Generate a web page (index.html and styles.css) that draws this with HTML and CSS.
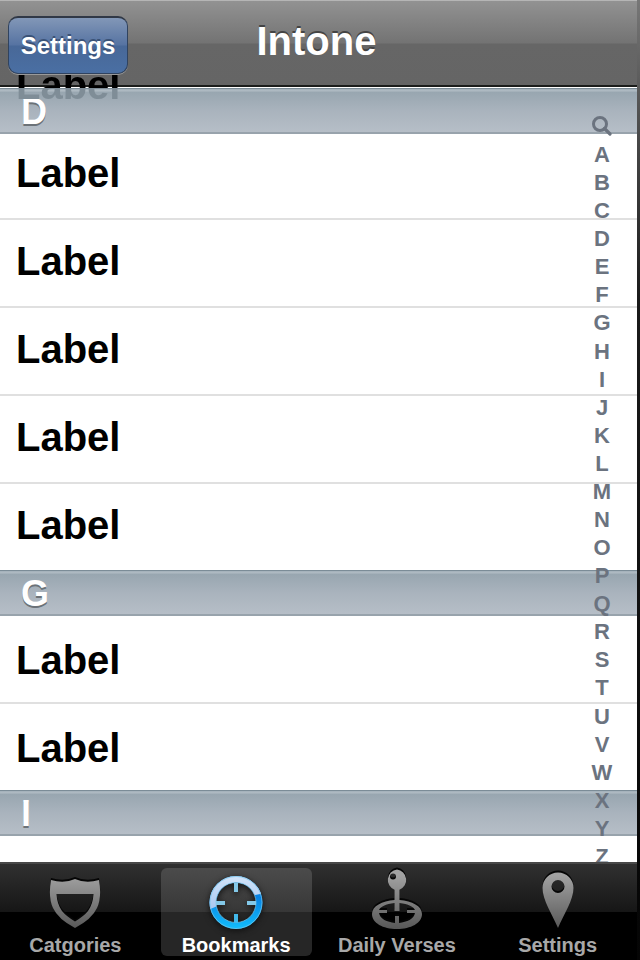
FILE: index.html
```html
<!DOCTYPE html>
<html lang="en">
<head>
<meta charset="utf-8">
<meta name="viewport" content="width=device-width, initial-scale=1">
<title>Intone</title>
<link rel="stylesheet" href="styles.css">
</head>
<body>
<div class="app">
  <header class="navbar">
    <button class="nav-button" type="button">Settings</button>
    <h1 class="title">Intone</h1>
    <span class="passing-row">Label</span>
  </header>
  <main class="content">
    <div class="list">
      <section>
        <h2 class="section-header">D</h2>
        <ul class="rows tucked"><li>Label</li><li>Label</li><li>Label</li><li>Label</li><li>Label</li></ul>
      </section>
      <section>
        <h2 class="section-header">G</h2>
        <ul class="rows"><li>Label</li><li>Label</li></ul>
      </section>
      <section>
        <h2 class="section-header">I</h2>
      </section>
    </div>
    <nav class="index" aria-label="Index">
      <a href="#search" aria-label="Search"><svg width="20" height="20" viewBox="0 0 20 20"><circle cx="8" cy="8" r="6.500" fill="none" stroke="#6b737f" stroke-width="3"/><path d="M12.500 12.500 18 18" stroke="#6b737f" stroke-width="3.200" stroke-linecap="round"/></svg></a>
      <a href="#a">A</a><a href="#b">B</a><a href="#c">C</a><a href="#d">D</a><a href="#e">E</a><a href="#f">F</a><a href="#g">G</a><a href="#h">H</a><a href="#i">I</a><a href="#j">J</a><a href="#k">K</a><a href="#l">L</a><a href="#m">M</a><a href="#n">N</a><a href="#o">O</a><a href="#p">P</a><a href="#q">Q</a><a href="#r">R</a><a href="#s">S</a><a href="#t">T</a><a href="#u">U</a><a href="#v">V</a><a href="#w">W</a><a href="#x">X</a><a href="#y">Y</a><a href="#z">Z</a>
    </nav>
  </main>
  <nav class="tabbar" aria-label="Tabs">
    <button class="tab" type="button">
      <svg class="icon" width="60" height="60" viewBox="0 0 60 60">
        <defs><linearGradient id="gray" gradientUnits="userSpaceOnUse" x1="0" y1="4" x2="0" y2="60"><stop offset="0" stop-color="#a2a2a2"/><stop offset="1" stop-color="#555"/></linearGradient></defs>
        <path fill="url(#gray)" fill-rule="evenodd" d="M6 9Q19 13 30 8Q41 13 54 9Q57 26 52 37Q47 48 30 57Q13 48 8 37Q3 26 6 9ZM11.500 23Q12 33 17 40Q21 45 30 50.500Q39 45 43 40Q48 33 48.500 23Z"/>
      </svg>
      <span>Catgories</span>
    </button>
    <button class="tab selected" type="button" aria-current="page">
      <svg class="icon" width="60" height="60" viewBox="0 0 60 60">
        <defs><linearGradient id="blue" x1="0" y1="0" x2="0" y2="1"><stop offset="0.4" stop-color="#0783e4"/><stop offset="1" stop-color="#12bdfb"/></linearGradient><linearGradient id="gloss" x1="0" y1="0" x2="0" y2="1"><stop offset="0" stop-color="#d3e5fa"/><stop offset="1" stop-color="#8cb5eb"/></linearGradient>
        <clipPath id="upper"><path d="M0 0H60V22Q28 27 0 40Z"/></clipPath></defs>
        <path fill="url(#blue)" fill-rule="evenodd" d="M30 5A26.500 26.500 0 1 1 30 58A26.500 26.500 0 1 1 30 5ZM30 11.500A20 20 0 1 0 30 51.500A20 20 0 1 0 30 11.500Z"/>
        <path fill="url(#gloss)" clip-path="url(#upper)" fill-rule="evenodd" d="M30 5A26.500 26.500 0 1 1 30 58A26.500 26.500 0 1 1 30 5ZM30 11.500A20 20 0 1 0 30 51.500A20 20 0 1 0 30 11.500Z"/>
        <g fill="none" stroke="#79c5ea" stroke-opacity="0.700"><circle cx="30" cy="31.500" r="26"/><circle cx="30" cy="31.500" r="20"/></g>
        <path stroke="#83c8e8" stroke-width="4" d="M30 12V21M10 32H19M41 32H50"/><path stroke="#42b8ea" stroke-width="4" d="M30 43V52"/>
      </svg>
      <span>Bookmarks</span>
    </button>
    <button class="tab" type="button">
      <svg class="icon" width="60" height="60" viewBox="0 0 60 60">
        <path fill="url(#gray)" fill-rule="evenodd" d="M30-1.500A10.500 10.500 0 0 1 32.500 18.700V29C45 30 55 35 55 43C55 52 44 58 30 58C16 58 5 52 5 43C5 35 15 30 27.500 29V18.700A10.500 10.500 0 0 1 30-1.500ZM26 2.500A3 3 0 1 0 26 8.500A3 3 0 1 0 26 2.500ZM27.500 32C19 33 13 36 12 39H20V42H12C13 48 20 51 28 52V45H32V52C40 51 47 48 48 42H40V39H48C47 36 41 33 32.500 32V40H27.500Z"/>
      </svg>
      <span>Daily Verses</span>
    </button>
    <button class="tab" type="button">
      <svg class="icon" width="60" height="60" viewBox="0 0 60 60">
        <path fill="url(#gray)" fill-rule="evenodd" d="M30 1.500A15.500 15.500 0 0 1 45.500 17C45.500 29 36 43 30 57C24 43 14.500 29 14.500 17A15.500 15.500 0 0 1 30 1.500ZM30 9A6.500 6.500 0 1 0 30 22A6.500 6.500 0 1 0 30 9Z"/>
      </svg>
      <span>Settings</span>
    </button>
  </nav>
</div>
</body>
</html>
```
FILE: styles.css
```css
* { box-sizing: border-box; }

body {
  margin: 0;
  font-family: "Liberation Sans", Arial, sans-serif;
  font-weight: bold;
}

button { font: inherit; border: 0; padding: 0; }
h1, h2, ul { margin: 0; padding: 0; }

.app {
  display: flex;
  flex-direction: column;
  height: 100vh;
  padding-right: 3px;
  background: linear-gradient(#777, #484848 140px, #1a1a1a 300px, #050505);
  overflow: hidden;
}

.navbar {
  position: relative;
  z-index: 1;
  flex: none;
  display: grid;
  grid-template-columns: 1fr auto 1fr;
  align-items: start;
  height: 87px;
  padding: 0 12px 0 8px;
  background: linear-gradient(#929292, #737373 42px, #666 43px, #656565);
  border-top: 1px solid #b5b5b5;
  border-bottom: 2px solid #1b1d1b;
}

.nav-button {
  position: relative;
  z-index: 1;
  justify-self: start;
  width: 120px;
  height: 58px;
  margin-top: 15px;
  border: 1px solid #30435f;
  border-top: 2px solid #303846;
  border-radius: 10px;
  background: linear-gradient(#8297b7, #5673a2 27px, #486898 28px, #4a6fa3);
  box-shadow: 0 1px 0 #9a9a9a;
  color: #fff;
  font-size: 24px;
  text-shadow: 0 -2px 0 #3a5277;
}

.title {
  color: #fff;
  font-size: 40px;
  line-height: 46px;
  margin-top: 17px;
  text-shadow: 0 -2px 0 #444;
}

/* The row sliding under the bar: black over the bar, dimmed over the section header. */
.passing-row {
  position: absolute;
  top: 61px;
  left: 16px;
  font-size: 40px;
  line-height: 46px;
  color: transparent;
  background: linear-gradient(#000 26px, #7f8d97 26px);
  background-clip: text;
  -webkit-background-clip: text;
}

.content {
  position: relative;
  flex: 1;
  min-height: 0;
  background: #fff;
  padding-top: 1px;
}

.section-header {
  position: relative;
  height: 46px;
  padding-left: 21px;
  border-top: 1px solid #7b8c97;
  border-bottom: 2px solid #98a3ac;
  background: linear-gradient(#a2b0b9 0, #b1bcc4 2px, #98a6b0 3px, #a9b3bd 50%, #b6bec7);
  color: #fff;
  font-size: 36px;
  line-height: 46px;
  text-shadow: 0 2px 0 #6b7278;
}

.rows { list-style: none; }

.rows li {
  height: 88px;
  padding-left: 16px;
  border-bottom: 2px solid #e0e0e0;
  color: #000;
  font-size: 40px;
  line-height: 88px;
}

.rows li:last-child {
  border-bottom: 0;
  height: 86px;
}

.tucked { margin-top: -2px; }
.tucked li { line-height: 82px; }

.index {
  position: absolute;
  top: 24px;
  bottom: -9px;
  right: 20px;
  width: 30px;
  display: grid;
  grid-template-rows: 30px;
  grid-auto-rows: 1fr;
}

.index a {
  display: flex;
  align-items: center;
  justify-content: center;
  min-height: 0;
  color: #6b737f;
  font-size: 22px;
  line-height: 24px;
  text-decoration: none;
}

.tabbar {
  position: relative;
  flex: none;
  display: grid;
  grid-template-columns: repeat(4, 1fr);
  column-gap: 10px;
  height: 98px;
  padding: 4px 4px 4px 0;
  border-top: 2px solid #484848;
  background: linear-gradient(#303030, #161616 48px, #000 48px);
}

.tab {
  display: flex;
  flex-direction: column;
  align-items: center;
  justify-content: space-between;
  padding-top: 3px;
  border-radius: 6px;
  background: none;
  color: #a8a8a8;
  font-size: 20px;
  line-height: 22px;
  white-space: nowrap;
}

.icon {
  overflow: visible;
  filter: drop-shadow(0 -2px 0 #050505);
}

.selected {
  background: linear-gradient(#4b4b4b, #373737 44px, #262626 44px);
  color: #fff;
}

.selected .icon { filter: drop-shadow(0 2px 3px #111); }
```
